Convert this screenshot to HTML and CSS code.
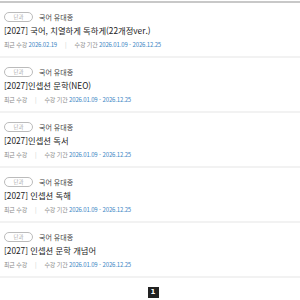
FILE: index.html
```html
<!DOCTYPE html>
<html lang="ko">
<head>
<meta charset="utf-8">
<link rel="stylesheet" href="styles.css">
</head>
<body>
<div class="list">
  <div class="item">
    <div class="head"><span class="badge">단과</span><span class="teacher">국어 유대종</span></div>
    <div class="title">[2027] 국어, 치열하게 독하게(22개정ver.)</div>
    <div class="meta"><span class="label">최근 수강</span> <span class="val">2026.02.19</span><span class="sep">|</span><span class="label">수강 기간</span> <span class="val">2026.01.09 - 2026.12.25</span></div>
  </div>
  <div class="item">
    <div class="head"><span class="badge">단과</span><span class="teacher">국어 유대종</span></div>
    <div class="title">[2027]인셉션 문학(NEO)</div>
    <div class="meta"><span class="label">최근 수강</span><span class="sep">|</span><span class="label">수강 기간</span> <span class="val">2026.01.09 - 2026.12.25</span></div>
  </div>
  <div class="item">
    <div class="head"><span class="badge">단과</span><span class="teacher">국어 유대종</span></div>
    <div class="title">[2027]인셉션 독서</div>
    <div class="meta"><span class="label">최근 수강</span><span class="sep">|</span><span class="label">수강 기간</span> <span class="val">2026.01.09 - 2026.12.25</span></div>
  </div>
  <div class="item">
    <div class="head"><span class="badge">단과</span><span class="teacher">국어 유대종</span></div>
    <div class="title">[2027] 인셉션 독해</div>
    <div class="meta"><span class="label">최근 수강</span><span class="sep">|</span><span class="label">수강 기간</span> <span class="val">2026.01.09 - 2026.12.25</span></div>
  </div>
  <div class="item">
    <div class="head"><span class="badge">단과</span><span class="teacher">국어 유대종</span></div>
    <div class="title">[2027] 인셉션 문학 개념어</div>
    <div class="meta"><span class="label">최근 수강</span><span class="sep">|</span><span class="label">수강 기간</span> <span class="val">2026.01.09 - 2026.12.25</span></div>
  </div>
</div>
<div class="paging"><span class="page">1</span></div>
</body>
</html>
```
FILE: styles.css
```css
html, body {
  margin: 0;
  padding: 0;
  background: #fff;
}
body {
  font-family: "Noto Sans CJK KR", "Noto Sans", sans-serif;
  color: #222;
}
.list {
  margin-top: 1px;
  border-top: 2px solid #c8c8c8;
}
.item {
  padding: 8px 4px 5px;
  border-bottom: 2px solid #f2f2f2;
}
.head {
  display: flex;
  align-items: center;
  height: 11px;
}
.badge {
  box-sizing: border-box;
  width: 29px;
  height: 10px;
  border: 1px solid #bbb;
  border-radius: 5px;
  font-size: 5.5px;
  line-height: 8px;
  color: #aaa;
  text-align: center;
}
.teacher {
  margin-left: 6px;
  font-size: 7px;
  color: #444;
}
.title {
  margin-top: 2px;
  height: 13px;
  line-height: 13px;
  font-size: 8.3px;
  color: #222;
  white-space: nowrap;
}
.meta {
  margin-top: 2px;
  height: 12px;
  line-height: 12px;
  font-size: 6px;
  letter-spacing: -0.15px;
  color: #888;
  white-space: nowrap;
}
.val {
  color: #3b86c4;
}
.sep {
  margin: 0 8px;
  color: #ccc;
}
.paging {
  display: flex;
  justify-content: center;
  padding-top: 9px;
  padding-left: 6px;
}
.page {
  width: 11px;
  height: 11px;
  background: #222;
  color: #fff;
  font-family: "DejaVu Sans", sans-serif;
  font-size: 7px;
  font-weight: bold;
  line-height: 11px;
  text-align: center;
}
```
